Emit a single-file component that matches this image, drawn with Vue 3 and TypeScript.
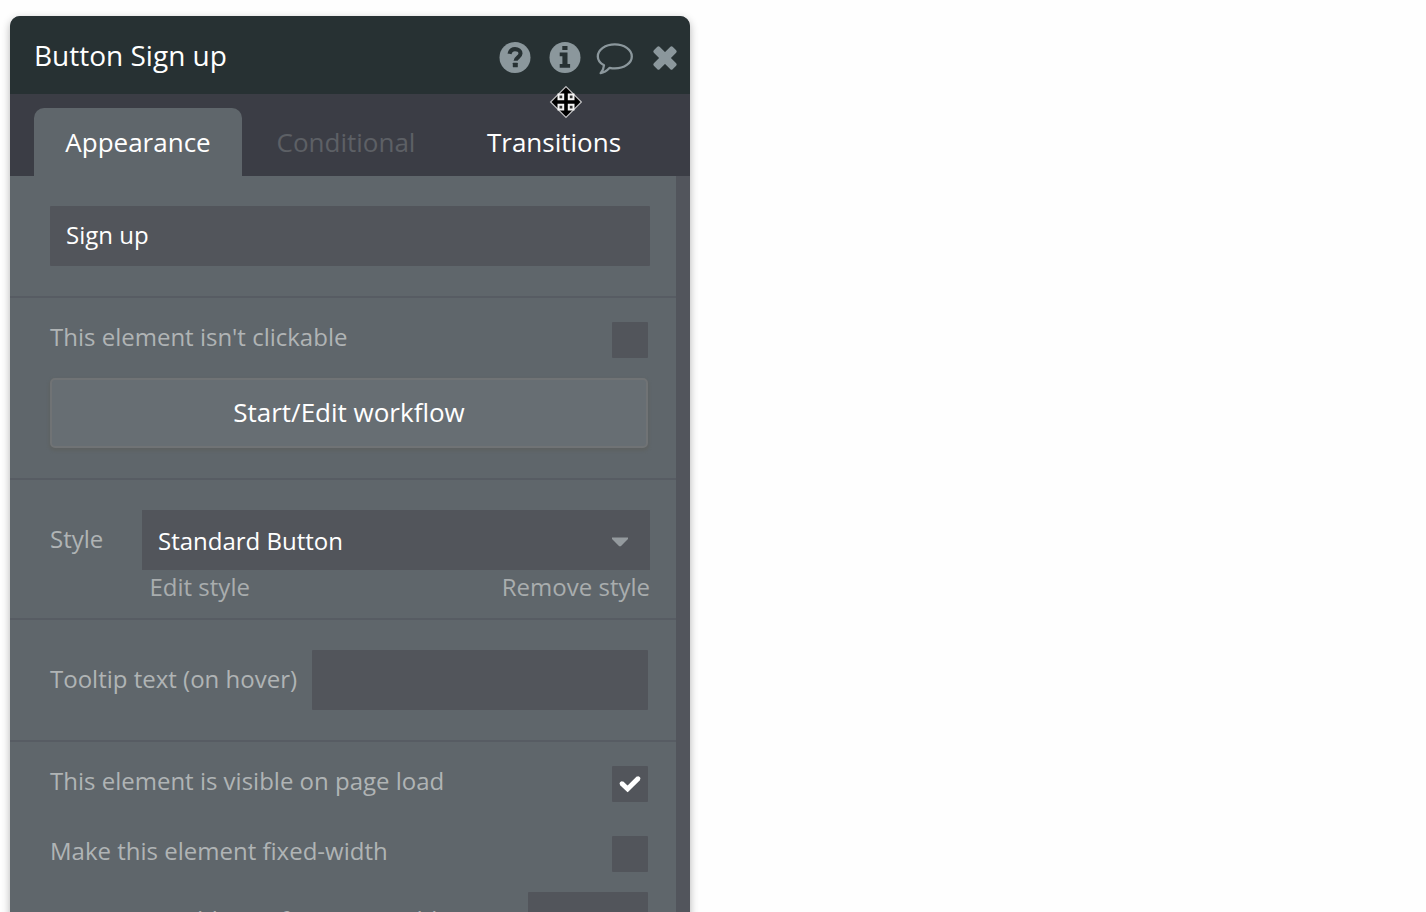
<script setup lang="ts">
import { ref } from 'vue'

const caption = ref('Sign up')
const tooltip = ref('')
</script>

<template>
  <main class="page">
    <section class="panel">
      <header class="title-bar">
        <h1>Button Sign up</h1>
        <div class="tools">
          <svg class="tool" width="32" height="32" viewBox="0 0 32 32">
            <circle cx="16" cy="15.5" r="15.5" fill="#8b979c" />
            <path d="M10.5 11.9C11.2 8.7 13.2 7.1 16 7.1c3.2 0 5.5 1.8 5.5 4.4 0 3.6-4.9 3.9-4.9 7.3" fill="none" stroke="#273133" stroke-width="4.1" />
            <rect x="13.8" y="20.7" width="5" height="4.6" rx=".6" fill="#273133" />
          </svg>
          <svg class="tool" width="32" height="32" viewBox="0 0 32 32">
            <circle cx="16" cy="15.5" r="15.5" fill="#8b979c" />
            <path d="M13.3 3.9h5.2v4.2h-5.2zM10.7 10.6h7.8v11.5h2.6v3.7H10.7v-3.7h2.7v-7.8h-2.7z" fill="#273133" />
          </svg>
          <svg class="tool bubble" width="38" height="34" viewBox="0 0 38 34">
            <path d="M18.8 3.4c9.4 0 17 5.4 17 12s-7.6 12-17 12c-1.8 0-3.5-.2-5.1-.6-2.5 2.6-5.2 4.8-9.1 5.4 2.3-2.5 3.2-4.8 3.4-7.9C4.4 22.2 1.8 19 1.8 15.4c0-6.6 7.6-12 17-12z" fill="none" stroke="#8b979c" stroke-width="2.3" stroke-linejoin="round" />
          </svg>
          <svg class="tool close" width="26" height="26" viewBox="0 0 26 26">
            <g fill="#8b979c" transform="rotate(45 13 13)">
              <rect x="-.3" y="8.9" width="26.6" height="8.2" rx="1.6" />
              <rect x="8.9" y="-.3" width="8.2" height="26.6" rx="1.6" />
            </g>
          </svg>
        </div>
      </header>

      <nav class="tabs">
        <div class="tab active">Appearance</div>
        <div class="tab disabled">Conditional</div>
        <div class="tab last">Transitions</div>
      </nav>

      <div class="body">
        <div class="group caption">
          <input v-model="caption" class="field" />
        </div>
        <div class="group workflow">
          <div class="row">
            <span class="label">This element isn't clickable</span>
            <span class="check"></span>
          </div>
          <button class="action">Start/Edit workflow</button>
        </div>
        <div class="group style">
          <div class="style-row">
            <span class="label">Style</span>
            <div class="select">
              <span>Standard Button</span>
              <svg width="18" height="12" viewBox="0 0 18 12"><path d="M1 2.4h16V4l-7.2 7.2H8.2L1 4z" fill="#949a9e" /></svg>
            </div>
          </div>
          <div class="links"><span>Edit style</span><span>Remove style</span></div>
        </div>
        <div class="group tooltip">
          <span class="label">Tooltip text (on hover)</span>
          <input v-model="tooltip" class="field" />
        </div>
        <div class="group visibility">
          <div class="row">
            <span class="label">This element is visible on page load</span>
            <span class="check">
              <svg width="22" height="19" viewBox="0 0 22 19"><path d="M2.6 8.3l6 5.7L19.4 3.2" fill="none" stroke="#fff" stroke-width="4.8" /><path d="M2.9 8.5l5.7 5.5L19.1 3.5" fill="none" stroke="#fff" stroke-width="4.4" stroke-linecap="round" /></svg>
            </span>
          </div>
          <div class="row">
            <span class="label">Make this element fixed-width</span>
            <span class="check"></span>
          </div>
          <div class="row clipped">
            <span class="label">Minimum width (% of current width)</span>
            <span class="field small"></span>
          </div>
        </div>
      </div>
    </section>
    <svg class="cursor" width="34" height="34" viewBox="0 0 34 34">
      <path d="M17 1.6L32.4 17 17 32.4 1.6 17z" fill="#000" stroke="#c4c4c6" stroke-width="1.2" />
      <path d="M9.5 9.5h4.7v4.7H9.5zM19.8 9.5h4.7v4.7h-4.7zM9.5 19.8h4.7v4.7H9.5zM19.8 19.8h4.7v4.7h-4.7z" fill="#333" stroke="#f4f4f4" stroke-width="2" />
    </svg>
  </main>
</template>

<style>
body { margin: 0; background: #fefefe; overflow: hidden; }
</style>

<style scoped>
* { box-sizing: border-box; }
.page { position: relative; height: 912px; padding: 16px 10px 0; overflow: hidden; font-family: "Open Sans", sans-serif; font-size: 24px; color: #fff; }
.panel { width: 680px; height: 930px; border-radius: 10px 10px 0 0; overflow: hidden; background: #5f666b; box-shadow: 0 3px 8px rgba(0, 0, 0, .3); }
.title-bar { height: 78px; background: #273133; display: flex; justify-content: space-between; padding: 0 12px 0 24px; }
h1 { margin: 0; font-size: 28px; font-weight: 400; line-height: 78px; white-space: nowrap; }
.tools { display: flex; align-items: center; padding-top: 5px; }
.tool { display: block; flex: none; margin-right: 18px; }
.tool.bubble { margin-left: -3px; }
.tool.close { margin: 1px 0 0; }
.tabs { height: 82px; padding: 14px 0 0 24px; background: #3b3d45; display: flex; font-size: 26px; line-height: 69px; text-align: center; }
.tab { width: 208px; border-radius: 10px 10px 0 0; }
.active { background: #5f666b; }
.disabled { color: #5d6065; }
.body { height: 760px; border-right: 14px solid #52555c; }
.group { padding: 0 26px 0 40px; border-bottom: 2px solid #575c63; }
.caption { height: 122px; padding-top: 30px; }
.field { display: block; height: 60px; border: 0; border-radius: 1px; outline: 0; background: #52555b; color: #fff; font: inherit; padding: 0 16px 3px; }
.caption .field { width: 600px; }
.workflow { height: 182px; padding-top: 24px; }
.label { color: #b0b4b5; line-height: 30px; white-space: nowrap; }
.row { height: 36px; width: 598px; display: flex; justify-content: space-between; }
.check { width: 36px; height: 36px; border-radius: 1px; background: #52555b; display: flex; align-items: center; justify-content: center; }
.action { display: block; width: 598px; height: 70px; margin: 20px 0 0; padding: 0 0 2px; border: 2px solid #707375; border-radius: 5px; background: #676e73; box-shadow: 0 2px 3px 1px #5e6262; color: #fff; font: 26px "Open Sans", sans-serif; }
.style { height: 140px; padding-top: 30px; }
.style-row { display: flex; width: 600px; justify-content: space-between; line-height: 60px; }
.style-row .label { line-height: 57px; }
.select { width: 508px; height: 60px; padding: 2px 21px 0 16px; background: #52555b; display: flex; align-items: center; justify-content: space-between; }
.links { width: 600px; padding-left: 99.5px; display: flex; justify-content: space-between; line-height: 34px; color: #a9adae; }
.tooltip { height: 122px; padding-top: 30px; display: flex; }
.tooltip .label { line-height: 57px; width: 262px; }
.tooltip .field { width: 336px; }
.visibility { padding-top: 24px; border: 0; }
.visibility .row { margin-bottom: 34px; }
.visibility .row:nth-child(2) { margin-bottom: 20px; }
.visibility .clipped { height: 60px; margin: 0; }
.clipped .label { line-height: 55px; }
.small { width: 120px; }
.cursor { position: absolute; left: 549px; top: 85px; }
</style>
